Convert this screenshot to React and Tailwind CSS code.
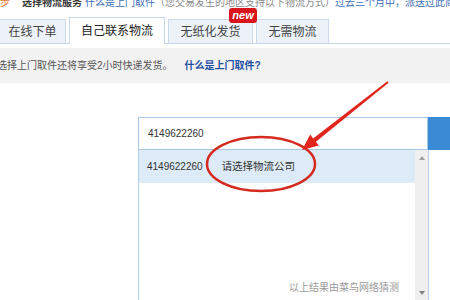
import React from "react";

const tabBase =
  "flex items-center justify-center border border-b-0 text-[12px] whitespace-nowrap";

export default function App() {
  return (
    <div className="relative w-[450px] h-[300px] overflow-hidden bg-white font-['Liberation_Sans','Noto_Sans_CJK_SC',sans-serif] text-[#333]">
      {/* top line, cut off by the window like in the screenshot */}
      <div className="h-[17px] overflow-hidden">
        <div className="-mt-[4px] whitespace-nowrap text-[10px] leading-[14px]">
          <span className="text-[#e07a2a]">步</span>
          <span className="ml-[12px] font-bold text-[#333]">选择物流服务</span>
          <span className="ml-[3px] text-[#3c6eb4]">什么是上门取件</span>
          <span className="text-[#888]">（您交易发生的地区支持以下物流方式）</span>
          <span className="text-[#3c6eb4]">过去三个月中，派送过此商品</span>
        </div>
      </div>

      {/* tabs */}
      <div className="relative flex items-end h-[27px] border-b border-[#c6d7ea]">
        <div className={`${tabBase} -ml-[1px] w-[67px] h-[24px] bg-[#edf2f9] border-[#cbd9ea] text-[#444]`}>
          在线下单
        </div>
        <div className={`${tabBase} ml-[3px] w-[96px] h-[27px] -mb-[1px] bg-white border-[#c6d7ea] text-[#222]`}>
          自己联系物流
        </div>
        <div className={`${tabBase} ml-[3px] w-[85px] h-[24px] bg-[#edf2f9] border-[#cbd9ea] text-[#444]`}>
          无纸化发货
        </div>
        <div className={`${tabBase} ml-[3px] w-[73px] h-[24px] bg-[#edf2f9] border-[#cbd9ea] text-[#444]`}>
          无需物流
        </div>
        <span className="absolute left-[229px] top-[-9px] w-[28px] h-[15px] rounded-[3px] bg-[#d8161b] text-white text-[11px] leading-[15px] font-bold italic text-center">
          new
        </span>
      </div>

      {/* notice band */}
      <div className="mt-[4px] h-[35px] bg-[#f2f2f2] flex items-center -ml-[3px] whitespace-nowrap text-[10px]">
        <span className="text-[#555]">选择上门取件还将享受2小时快递发货。</span>
        <span className="ml-[12px] font-bold text-[#1e50a2]">什么是上门取件?</span>
      </div>

      {/* input row */}
      <div className="mt-[34px] pl-[138px] flex h-[33px]">
        <div className="w-[290px] border border-[#a9c8e6] flex items-center pl-[9px] text-[10px] text-[#333]">
          4149622260
        </div>
        <div className="flex-1 bg-[#3a8ad6]" />
      </div>

      {/* dropdown */}
      <div className="ml-[138px] w-[291px] h-[150px] flex border-l border-r border-[#b5d0ea]">
        <div className="flex-1 flex flex-col">
          <div className="h-[33px] bg-[#ddebf8] flex items-center pl-[8px] text-[10px] text-[#333]">
            <span>4149622260</span>
            <span className="ml-[19px] text-[10.5px]">请选择物流公司</span>
          </div>
          <div className="flex-1" />
          <div className="pb-[5px] pr-[16px] text-right text-[10px] leading-[14px] text-[#999]">
            以上结果由菜鸟网络猜测
          </div>
        </div>
        <div className="w-[13px] bg-[#efefef] flex flex-col items-center justify-between pt-[6px] pb-[5px]">
          <svg width="6" height="4" viewBox="0 0 6 4">
            <path d="M3 0 L6 4 L0 4 Z" fill="#a0a0a0" />
          </svg>
          <svg width="6" height="4" viewBox="0 0 6 4">
            <path d="M0 0 L6 0 L3 4 Z" fill="#808080" />
          </svg>
        </div>
      </div>

      {/* red annotation */}
      <svg
        className="absolute inset-0 pointer-events-none"
        width="450"
        height="300"
        viewBox="0 0 450 300"
      >
        <ellipse cx="261" cy="164" rx="54" ry="27" fill="none" stroke="#d42a1f" strokeWidth="2.5" />
        <polygon
          points="387.4,81.2 313.1,138.4 310.2,134.6 302,150 318.8,145.6 315.9,141.8 388.6,82.8"
          fill="#e0261c"
        />
      </svg>
    </div>
  );
}
